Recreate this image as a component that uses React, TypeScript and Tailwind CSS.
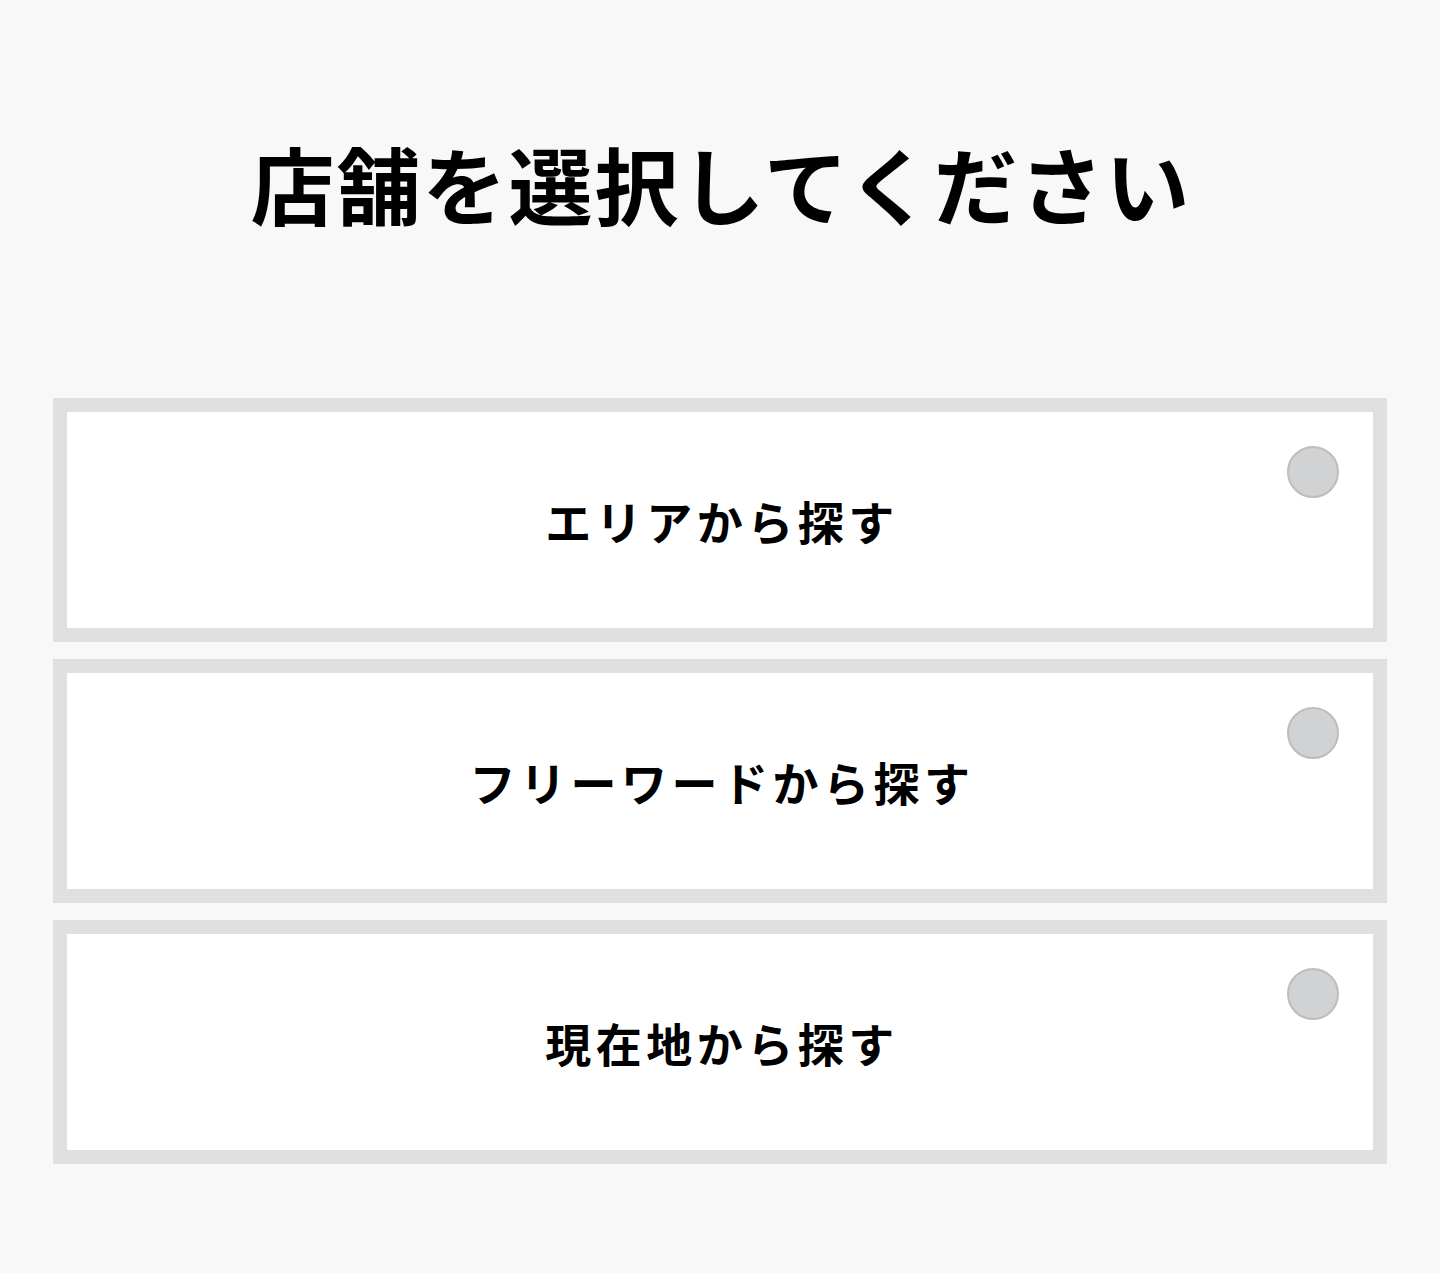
import React from 'react';

const OPTIONS = ['エリアから探す', 'フリーワードから探す', '現在地から探す'];

function OptionCard({ label }: { label: string }) {
  return (
    <button
      type="button"
      className="relative flex h-[244px] w-full items-center justify-center border-[14px] border-[#e0e0e0] bg-white"
    >
      <span className="pl-[4px] text-[46px] font-bold leading-none tracking-[4.5px] text-black">{label}</span>
      <span className="absolute right-[34px] top-[34px] h-[52px] w-[52px] rounded-full border-2 border-[#bdbdbd] bg-[#d1d2d4]" />
    </button>
  );
}

export default function App() {
  return (
    <div
      className="min-h-[1273px] w-full bg-[#f8f8f8] px-[53px] pt-[123px]"
      style={{ fontFamily: '"Noto Sans CJK JP", "Noto Sans", sans-serif' }}
    >
      <h1 className="pl-[2px] text-center text-[84px] font-bold leading-[120px] tracking-[2px] text-black">
        店舗を選択してください
      </h1>
      <div className="mt-[155px] flex flex-col gap-[17px]">
        {OPTIONS.map((o) => (
          <OptionCard key={o} label={o} />
        ))}
      </div>
    </div>
  );
}
